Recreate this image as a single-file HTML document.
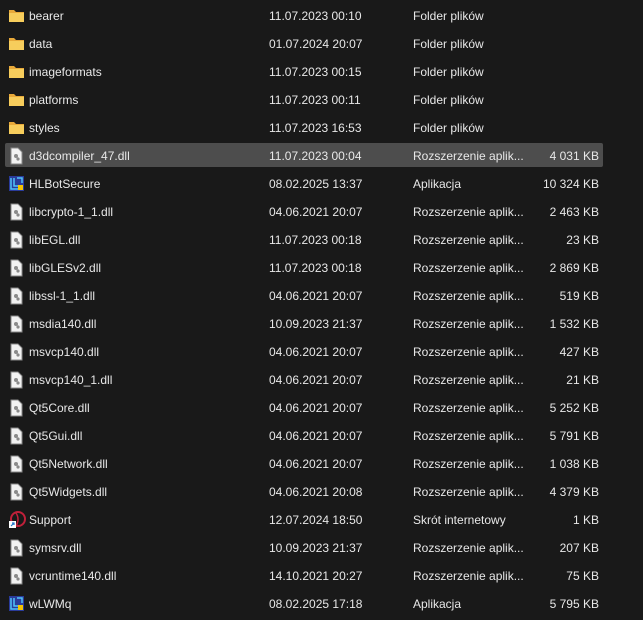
<!DOCTYPE html><html><head><style>
body{margin:0;width:643px;height:620px;background:#191919;font-family:"Liberation Sans",sans-serif;font-size:12px;color:#e8e8e8;overflow:hidden;position:relative}
.r{position:absolute;left:0;width:643px;height:24px;line-height:27px}
.sel{background:#4d4d4d;left:5px;width:598px;border-radius:2px}
.r span{position:absolute;white-space:nowrap}
.n{left:29px}.d{left:269px}.t{left:413px}.s{right:44px}
.sel .n{left:24px}.sel .d{left:264px}.sel .t{left:408px}.sel .s{right:4px}
.ic{position:absolute;left:8px;top:4px}
.sel .ic{left:3px}
</style></head><body>
<svg width="0" height="0" style="position:absolute"><defs>
<g id="f"><path d="M1 3h5l2 2h8v10H1z" fill="#e8a93a"/><path d="M1 6h15v9H1z" fill="#f7cd5c"/></g>
<g id="dl"><path d="M3 1h7l4 4v12H3z" fill="#f2f2f2" stroke="#888" stroke-width="1"/><circle cx="8" cy="9" r="2" fill="#8a8a8a"/><circle cx="10" cy="12" r="1.6" fill="#8a8a8a"/></g>
<g id="ap"><rect x="1" y="1" width="15" height="15" fill="#2a3b9a"/><path d="M3 3v11h11M6 3v8h8M9 3h5v5" stroke="#4fc3f7" stroke-width="1.5" fill="none"/><rect x="10" y="10" width="5" height="5" fill="#f5c400"/></g>
<g id="sp"><circle cx="10" cy="8" r="7" fill="none" stroke="#c0203a" stroke-width="2"/><path d="M8 2q4 6 0 13" stroke="#c0203a" stroke-width="1.5" fill="none"/><rect x="1" y="10" width="7" height="7" fill="#fff"/><path d="M3 15l3-3M4 12h2v2" stroke="#2277cc" stroke-width="1.2" fill="none"/></g>
</defs></svg>
<div class="r" style="top:3px"><svg class="ic" width="18" height="17"><use href="#f"/></svg><span class="n">bearer</span><span class="d">11.07.2023 00:10</span><span class="t">Folder plików</span></div>
<div class="r" style="top:31px"><svg class="ic" width="18" height="17"><use href="#f"/></svg><span class="n">data</span><span class="d">01.07.2024 20:07</span><span class="t">Folder plików</span></div>
<div class="r" style="top:59px"><svg class="ic" width="18" height="17"><use href="#f"/></svg><span class="n">imageformats</span><span class="d">11.07.2023 00:15</span><span class="t">Folder plików</span></div>
<div class="r" style="top:87px"><svg class="ic" width="18" height="17"><use href="#f"/></svg><span class="n">platforms</span><span class="d">11.07.2023 00:11</span><span class="t">Folder plików</span></div>
<div class="r" style="top:115px"><svg class="ic" width="18" height="17"><use href="#f"/></svg><span class="n">styles</span><span class="d">11.07.2023 16:53</span><span class="t">Folder plików</span></div>
<div class="r sel" style="top:143px"><svg class="ic" width="18" height="18"><use href="#dl"/></svg><span class="n">d3dcompiler_47.dll</span><span class="d">11.07.2023 00:04</span><span class="t">Rozszerzenie aplik...</span><span class="s">4 031 KB</span></div>
<div class="r" style="top:171px"><svg class="ic" width="18" height="18"><use href="#ap"/></svg><span class="n">HLBotSecure</span><span class="d">08.02.2025 13:37</span><span class="t">Aplikacja</span><span class="s">10 324 KB</span></div>
<div class="r" style="top:199px"><svg class="ic" width="18" height="18"><use href="#dl"/></svg><span class="n">libcrypto-1_1.dll</span><span class="d">04.06.2021 20:07</span><span class="t">Rozszerzenie aplik...</span><span class="s">2 463 KB</span></div>
<div class="r" style="top:227px"><svg class="ic" width="18" height="18"><use href="#dl"/></svg><span class="n">libEGL.dll</span><span class="d">11.07.2023 00:18</span><span class="t">Rozszerzenie aplik...</span><span class="s">23 KB</span></div>
<div class="r" style="top:255px"><svg class="ic" width="18" height="18"><use href="#dl"/></svg><span class="n">libGLESv2.dll</span><span class="d">11.07.2023 00:18</span><span class="t">Rozszerzenie aplik...</span><span class="s">2 869 KB</span></div>
<div class="r" style="top:283px"><svg class="ic" width="18" height="18"><use href="#dl"/></svg><span class="n">libssl-1_1.dll</span><span class="d">04.06.2021 20:07</span><span class="t">Rozszerzenie aplik...</span><span class="s">519 KB</span></div>
<div class="r" style="top:311px"><svg class="ic" width="18" height="18"><use href="#dl"/></svg><span class="n">msdia140.dll</span><span class="d">10.09.2023 21:37</span><span class="t">Rozszerzenie aplik...</span><span class="s">1 532 KB</span></div>
<div class="r" style="top:339px"><svg class="ic" width="18" height="18"><use href="#dl"/></svg><span class="n">msvcp140.dll</span><span class="d">04.06.2021 20:07</span><span class="t">Rozszerzenie aplik...</span><span class="s">427 KB</span></div>
<div class="r" style="top:367px"><svg class="ic" width="18" height="18"><use href="#dl"/></svg><span class="n">msvcp140_1.dll</span><span class="d">04.06.2021 20:07</span><span class="t">Rozszerzenie aplik...</span><span class="s">21 KB</span></div>
<div class="r" style="top:395px"><svg class="ic" width="18" height="18"><use href="#dl"/></svg><span class="n">Qt5Core.dll</span><span class="d">04.06.2021 20:07</span><span class="t">Rozszerzenie aplik...</span><span class="s">5 252 KB</span></div>
<div class="r" style="top:423px"><svg class="ic" width="18" height="18"><use href="#dl"/></svg><span class="n">Qt5Gui.dll</span><span class="d">04.06.2021 20:07</span><span class="t">Rozszerzenie aplik...</span><span class="s">5 791 KB</span></div>
<div class="r" style="top:451px"><svg class="ic" width="18" height="18"><use href="#dl"/></svg><span class="n">Qt5Network.dll</span><span class="d">04.06.2021 20:07</span><span class="t">Rozszerzenie aplik...</span><span class="s">1 038 KB</span></div>
<div class="r" style="top:479px"><svg class="ic" width="18" height="18"><use href="#dl"/></svg><span class="n">Qt5Widgets.dll</span><span class="d">04.06.2021 20:08</span><span class="t">Rozszerzenie aplik...</span><span class="s">4 379 KB</span></div>
<div class="r" style="top:507px"><svg class="ic" width="18" height="18"><use href="#sp"/></svg><span class="n">Support</span><span class="d">12.07.2024 18:50</span><span class="t">Skrót internetowy</span><span class="s">1 KB</span></div>
<div class="r" style="top:535px"><svg class="ic" width="18" height="18"><use href="#dl"/></svg><span class="n">symsrv.dll</span><span class="d">10.09.2023 21:37</span><span class="t">Rozszerzenie aplik...</span><span class="s">207 KB</span></div>
<div class="r" style="top:563px"><svg class="ic" width="18" height="18"><use href="#dl"/></svg><span class="n">vcruntime140.dll</span><span class="d">14.10.2021 20:27</span><span class="t">Rozszerzenie aplik...</span><span class="s">75 KB</span></div>
<div class="r" style="top:591px"><svg class="ic" width="18" height="18"><use href="#ap"/></svg><span class="n">wLWMq</span><span class="d">08.02.2025 17:18</span><span class="t">Aplikacja</span><span class="s">5 795 KB</span></div>
</body></html>
